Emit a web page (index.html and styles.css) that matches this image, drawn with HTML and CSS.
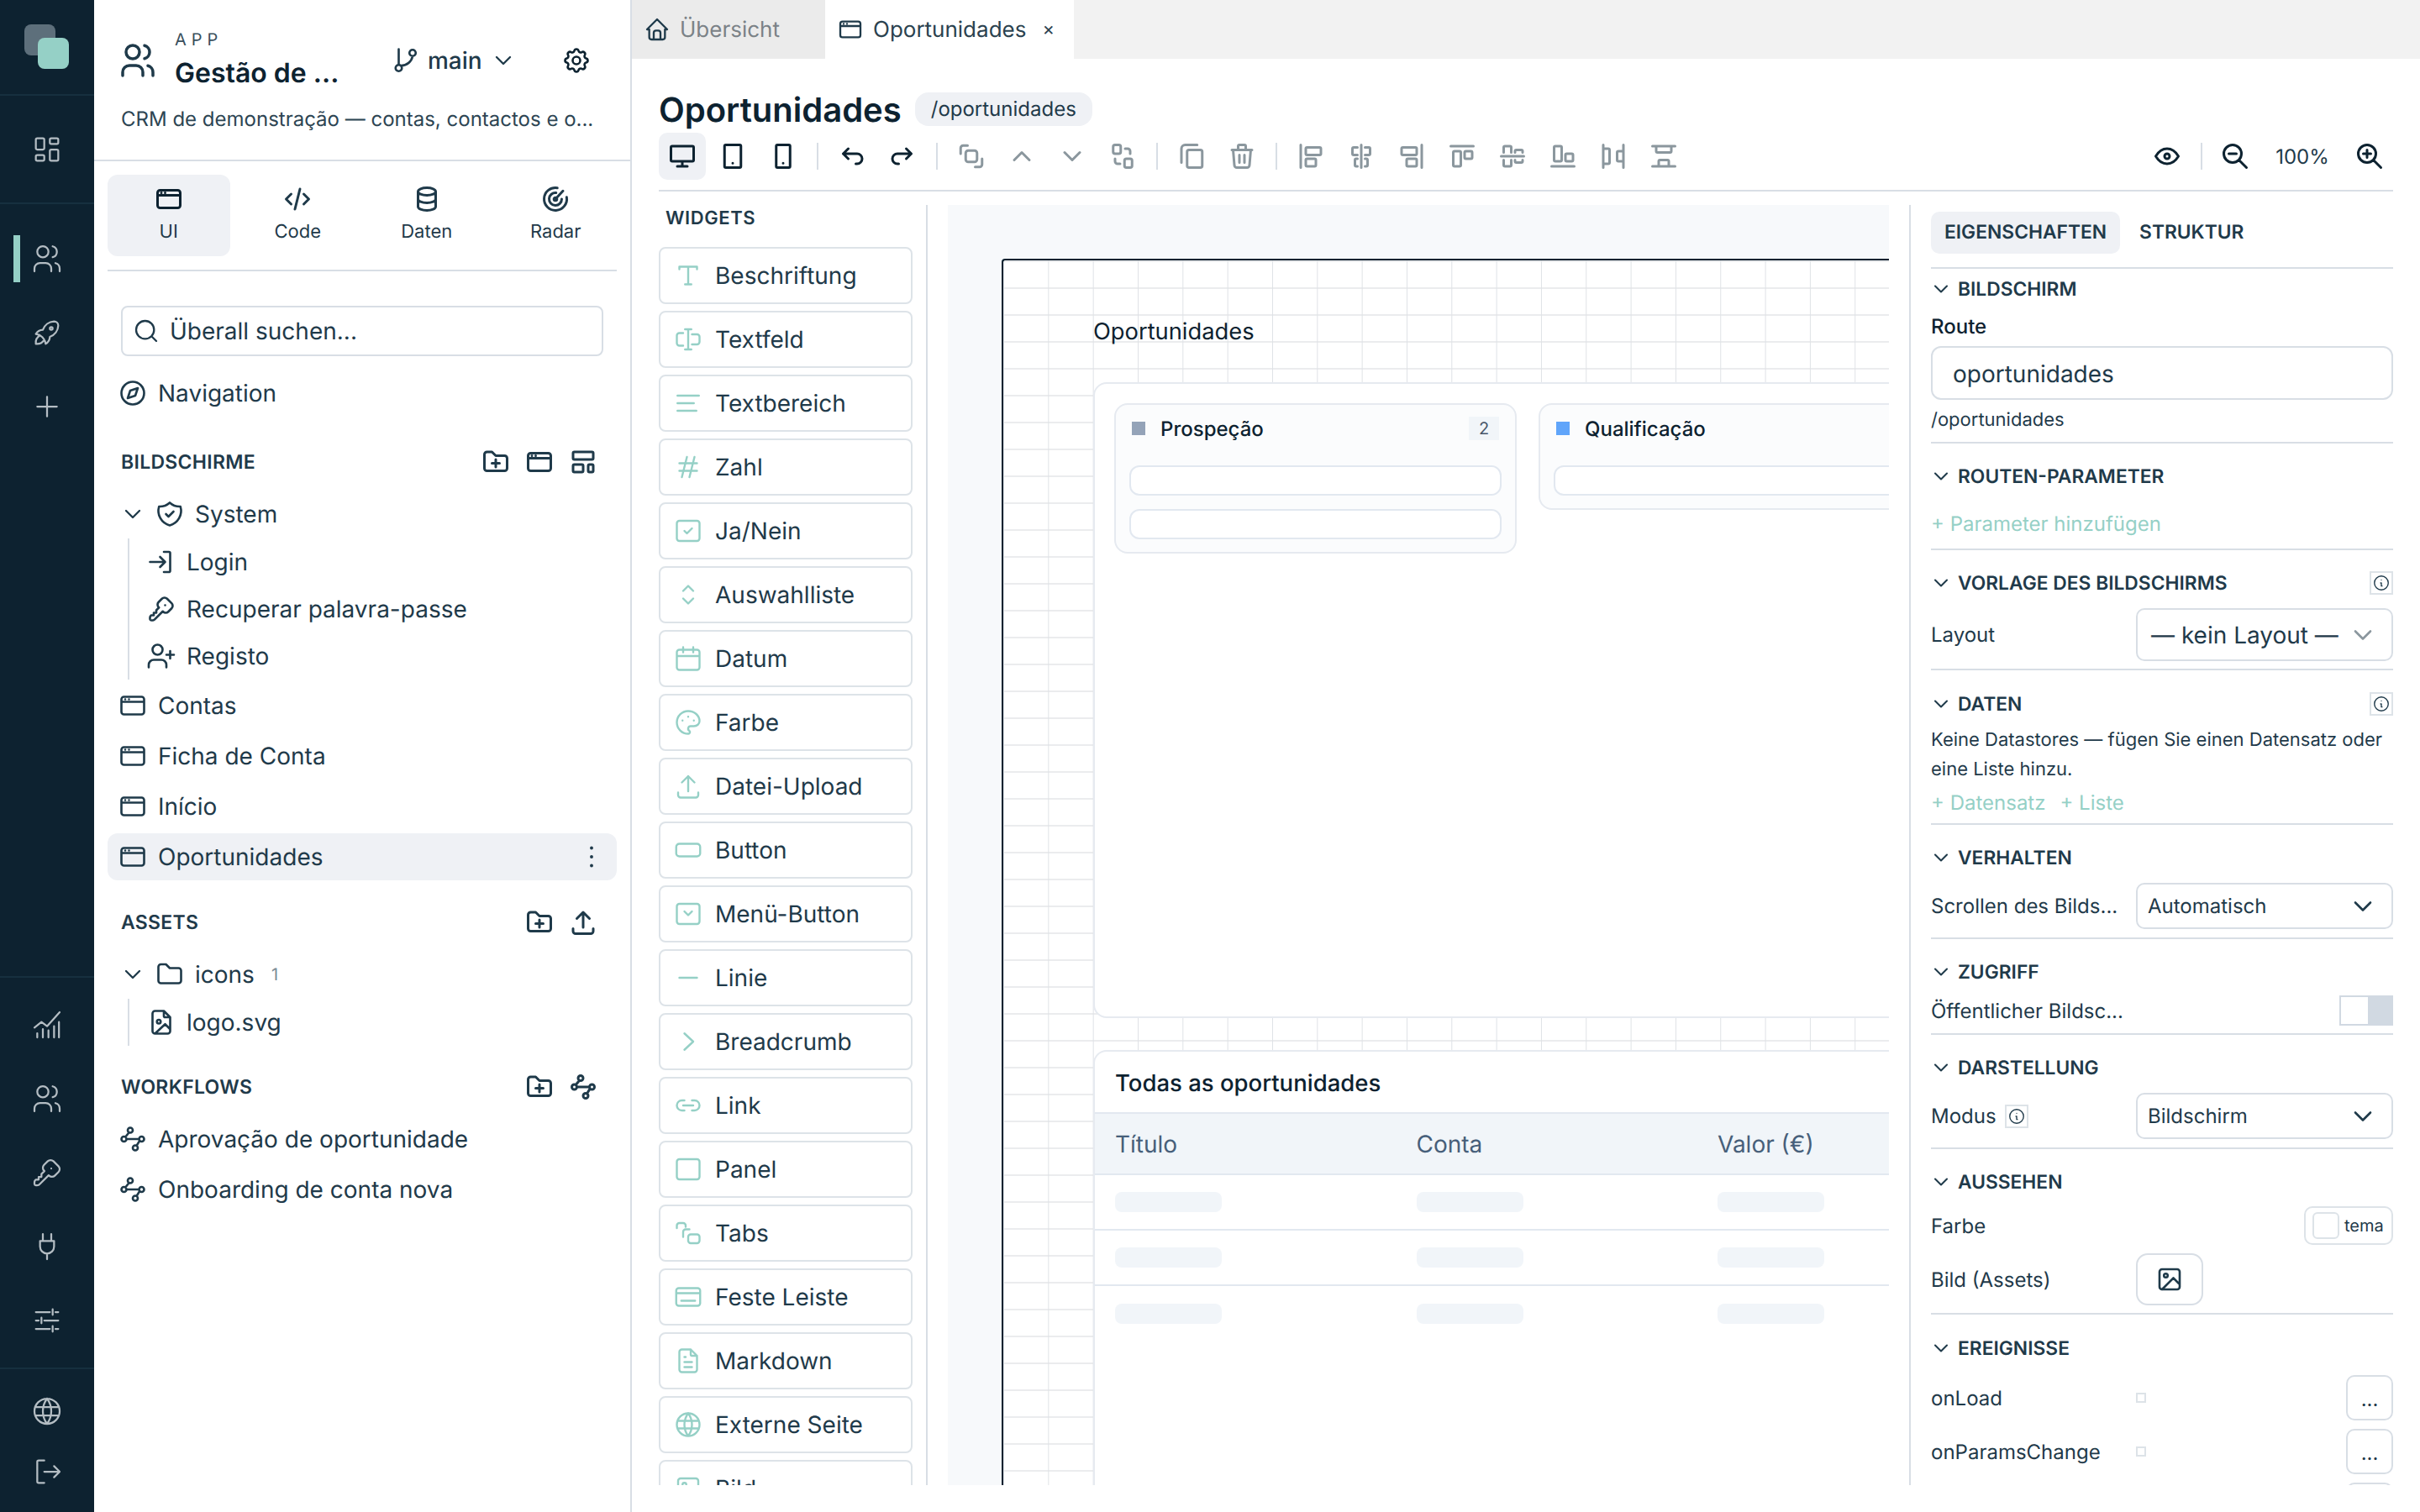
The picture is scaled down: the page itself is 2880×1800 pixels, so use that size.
FILE: index.html
```html
<!DOCTYPE html>
<html lang="de">
<head>
    <meta charset="UTF-8">
    <title>Oportunidades</title>
    <link rel="stylesheet" href="styles.css">
</head>
<body>
    <svg class="sprite" xmlns="http://www.w3.org/2000/svg">
        <symbol id="dashboard" viewBox="0 0 24 24"><path d="M5 4h4a1 1 0 0 1 1 1v6a1 1 0 0 1-1 1H5a1 1 0 0 1-1-1V5a1 1 0 0 1 1-1M5 16h4a1 1 0 0 1 1 1v2a1 1 0 0 1-1 1H5a1 1 0 0 1-1-1v-2a1 1 0 0 1 1-1M15 12h4a1 1 0 0 1 1 1v6a1 1 0 0 1-1 1h-4a1 1 0 0 1-1-1v-6a1 1 0 0 1 1-1M15 4h4a1 1 0 0 1 1 1v2a1 1 0 0 1-1 1h-4a1 1 0 0 1-1-1V5a1 1 0 0 1 1-1"/></symbol>
        <symbol id="users" viewBox="0 0 24 24"><path d="M5 7a4 4 0 1 0 8 0a4 4 0 1 0-8 0M3 21v-2a4 4 0 0 1 4-4h4a4 4 0 0 1 4 4v2M16 3.13a4 4 0 0 1 0 7.75M21 21v-2a4 4 0 0 0-3-3.85"/></symbol>
        <symbol id="rocket" viewBox="0 0 24 24"><path d="M4 13a8 8 0 0 1 7 7a6 6 0 0 0 3-5a9 9 0 0 0 6-8a3 3 0 0 0-3-3a9 9 0 0 0-8 6a6 6 0 0 0-5 3M7 14a6 6 0 0 0-3 6a6 6 0 0 0 6-3M14 9a1 1 0 1 0 2 0a1 1 0 1 0-2 0"/></symbol>
        <symbol id="plus" viewBox="0 0 24 24"><path d="M12 5v14M5 12h14"/></symbol>
        <symbol id="chart" viewBox="0 0 24 24"><path d="M3 14l5-4 4 3 9-10M5 21v-3M9 21v-6M13 21v-5M17 21v-8M20.500 21v-11"/></symbol>
        <symbol id="key" viewBox="0 0 24 24"><path d="M16.555 3.843l3.602 3.602a2.877 2.877 0 0 1 0 4.069l-2.643 2.643a2.877 2.877 0 0 1-4.069 0l-.301-.301l-6.558 6.558a2 2 0 0 1-1.239.578l-.175.008h-1.172a1 1 0 0 1-.993-.883l-.007-.117v-1.172a2 2 0 0 1 .467-1.284l.119-.13l.414-.414h2v-2h2v-2l2.144-2.144l-.301-.301a2.877 2.877 0 0 1 0-4.069l2.643-2.643a2.877 2.877 0 0 1 4.069 0zM15 9h.01"/></symbol>
        <symbol id="plug" viewBox="0 0 24 24"><path d="M9 3v5M15 3v5M7 8h10v4a5 5 0 0 1-10 0zM12 17v4"/></symbol>
        <symbol id="sliders" viewBox="0 0 24 24"><path d="M4 6h10M18 6h2M16 4v4M4 12h2M10 12h10M8 10v4M4 18h10M18 18h2M16 16v4"/></symbol>
        <symbol id="globe" viewBox="0 0 24 24"><path d="M3 12a9 9 0 1 0 18 0a9 9 0 0 0-18 0M3.600 9h16.800M3.600 15h16.800M12 3a15 15 0 0 1 0 18M12 3a15 15 0 0 0 0 18"/></symbol>
        <symbol id="logout" viewBox="0 0 24 24"><path d="M10 4H6a1 1 0 0 0-1 1v14a1 1 0 0 0 1 1h4M10 12h11M17 8l4 4-4 4"/></symbol>
        <symbol id="branch" viewBox="0 0 24 24"><path d="M7 3v12M4.500 18a2.500 2.500 0 1 0 5 0a2.500 2.500 0 1 0-5 0M15.500 6a2.500 2.500 0 1 0 5 0a2.500 2.500 0 1 0-5 0M18 8.500a9 9 0 0 1-9 7.500"/></symbol>
        <symbol id="chevron-down" viewBox="0 0 24 24"><path d="M6 9l6 6 6-6"/></symbol>
        <symbol id="chevron-up" viewBox="0 0 24 24"><path d="M6 15l6-6 6 6"/></symbol>
        <symbol id="chevron-right" viewBox="0 0 24 24"><path d="M9 5.500l7 6.500-7 6.500"/></symbol>
        <symbol id="settings" viewBox="0 0 24 24"><path d="M10.325 4.317c.426-1.756 2.924-1.756 3.35 0a1.724 1.724 0 0 0 2.573 1.066c1.543-.94 3.31.826 2.37 2.37a1.724 1.724 0 0 0 1.065 2.572c1.756.426 1.756 2.924 0 3.35a1.724 1.724 0 0 0-1.066 2.573c.94 1.543-.826 3.31-2.37 2.37a1.724 1.724 0 0 0-2.572 1.065c-.426 1.756-2.924 1.756-3.35 0a1.724 1.724 0 0 0-2.573-1.066c-1.543.94-3.31-.826-2.37-2.37a1.724 1.724 0 0 0-1.065-2.572c-1.756-.426-1.756-2.924 0-3.35a1.724 1.724 0 0 0 1.066-2.573c-.94-1.543.826-3.31 2.37-2.37c1 .608 2.296.07 2.572-1.065M9 12a3 3 0 1 0 6 0a3 3 0 0 0-6 0"/></symbol>
        <symbol id="window" viewBox="0 0 24 24"><path d="M5 5h14a2 2 0 0 1 2 2v10a2 2 0 0 1-2 2H5a2 2 0 0 1-2-2V7a2 2 0 0 1 2-2M3 9h18M6 7h.01M9 7h.01"/></symbol>
        <symbol id="code" viewBox="0 0 24 24"><path d="M7 8l-4 4 4 4M17 8l4 4-4 4M14 4l-4 16"/></symbol>
        <symbol id="database" viewBox="0 0 24 24"><path d="M5 6a7 3 0 1 0 14 0a7 3 0 1 0-14 0M5 6v6a7 3 0 0 0 14 0V6M5 12v6a7 3 0 0 0 14 0v-6"/></symbol>
        <symbol id="radar" viewBox="0 0 24 24"><path d="M13.500 3.100a9 9 0 1 0 7.400 7.400M12.500 7a5 5 0 1 0 4.500 5M10.800 12a1.200 1.200 0 1 0 2.400 0a1.200 1.200 0 1 0-2.400 0M12 12l6-6.500"/></symbol>
        <symbol id="search" viewBox="0 0 24 24"><path d="M3 11a8 8 0 1 0 16 0a8 8 0 1 0-16 0M21 21l-4.300-4.300"/></symbol>
        <symbol id="compass" viewBox="0 0 24 24"><path d="M3 12a9 9 0 1 0 18 0a9 9 0 0 0-18 0M8 16l2-6 6-2-2 6z"/></symbol>
        <symbol id="folder-plus" viewBox="0 0 24 24"><path d="M5 4h4l3 3h7a2 2 0 0 1 2 2v8a2 2 0 0 1-2 2H5a2 2 0 0 1-2-2V6a2 2 0 0 1 2-2M12 10v6M9 13h6"/></symbol>
        <symbol id="folder" viewBox="0 0 24 24"><path d="M5 4h4l3 3h7a2 2 0 0 1 2 2v8a2 2 0 0 1-2 2H5a2 2 0 0 1-2-2V6a2 2 0 0 1 2-2"/></symbol>
        <symbol id="template" viewBox="0 0 24 24"><path d="M5 4h14a1 1 0 0 1 1 1v4a1 1 0 0 1-1 1H5a1 1 0 0 1-1-1V5a1 1 0 0 1 1-1M5 14h6a1 1 0 0 1 1 1v4a1 1 0 0 1-1 1H5a1 1 0 0 1-1-1v-4a1 1 0 0 1 1-1M17 14h2a1 1 0 0 1 1 1v4a1 1 0 0 1-1 1h-2a1 1 0 0 1-1-1v-4a1 1 0 0 1 1-1"/></symbol>
        <symbol id="shield" viewBox="0 0 24 24"><path d="M12 3a12 12 0 0 0 8.500 3a12 12 0 0 1-8.500 15a12 12 0 0 1-8.500-15a12 12 0 0 0 8.500-3M9 12l2 2 4-4"/></symbol>
        <symbol id="login" viewBox="0 0 24 24"><path d="M14 4h4a1 1 0 0 1 1 1v14a1 1 0 0 1-1 1h-4M3 12h12M11 8l4 4-4 4"/></symbol>
        <symbol id="user-plus" viewBox="0 0 24 24"><path d="M16 21v-2a4 4 0 0 0-4-4H6a4 4 0 0 0-4 4v2M5 7a4 4 0 1 0 8 0a4 4 0 1 0-8 0M19 8v6M22 11h-6"/></symbol>
        <symbol id="dots" viewBox="0 0 24 24"><path d="M12 5v.01M12 12v.01M12 19v.01"/></symbol>
        <symbol id="upload" viewBox="0 0 24 24"><path d="M4 17v2a2 2 0 0 0 2 2h12a2 2 0 0 0 2-2v-2M7 9l5-5 5 5M12 4v12"/></symbol>
        <symbol id="file-image" viewBox="0 0 24 24"><path d="M14 3v4a1 1 0 0 0 1 1h4M17 21H7a2 2 0 0 1-2-2V5a2 2 0 0 1 2-2h7l5 5v11a2 2 0 0 1-2 2zM8.500 11.500a1.500 1.500 0 1 0 3 0a1.500 1.500 0 1 0-3 0M7.500 20.500l7.500-7 4 4"/></symbol>
        <symbol id="workflow" viewBox="0 0 24 24"><path d="M8 5a2 2 0 1 0 4 0a2 2 0 1 0-4 0M3 12a2 2 0 1 0 4 0a2 2 0 1 0-4 0M17 12a2 2 0 1 0 4 0a2 2 0 1 0-4 0M12 19a2 2 0 1 0 4 0a2 2 0 1 0-4 0M9 6.800L6.300 10.200M7 12h10M17.300 13.600L15 17.300"/></symbol>
        <symbol id="home" viewBox="0 0 24 24"><path d="M5 12H3l9-9 9 9h-2M5 12v7a2 2 0 0 0 2 2h10a2 2 0 0 0 2-2v-7M9 21v-6a2 2 0 0 1 2-2h2a2 2 0 0 1 2 2v6"/></symbol>
        <symbol id="desktop" viewBox="0 0 24 24"><path d="M4 4h16a1 1 0 0 1 1 1v10a1 1 0 0 1-1 1H4a1 1 0 0 1-1-1V5a1 1 0 0 1 1-1M8 20h8M12 16v4"/></symbol>
        <symbol id="tablet" viewBox="0 0 24 24"><path d="M6.500 3h11a1 1 0 0 1 1 1v16a1 1 0 0 1-1 1h-11a1 1 0 0 1-1-1V4a1 1 0 0 1 1-1M12 17.500v.01"/></symbol>
        <symbol id="phone" viewBox="0 0 24 24"><path d="M7.500 3h9a1 1 0 0 1 1 1v16a1 1 0 0 1-1 1h-9a1 1 0 0 1-1-1V4a1 1 0 0 1 1-1M12 17.500v.01"/></symbol>
        <symbol id="undo" viewBox="0 0 24 24"><path d="M9 14l-4-4 4-4M5 10h11a4 4 0 1 1 0 8h-1"/></symbol>
        <symbol id="redo" viewBox="0 0 24 24"><path d="M15 14l4-4-4-4M19 10H8a4 4 0 1 0 0 8h1"/></symbol>
        <symbol id="group" viewBox="0 0 24 24"><path d="M3.500 10V5.500a2 2 0 0 1 2-2h3.500M20.500 14v4.500a2 2 0 0 1-2 2H15M9.500 7.500h5a2 2 0 0 1 2 2v5a2 2 0 0 1-2 2h-5a2 2 0 0 1-2-2v-5a2 2 0 0 1 2-2"/></symbol>
        <symbol id="ungroup" viewBox="0 0 24 24"><path d="M6 3h3a1.500 1.500 0 0 1 1.500 1.500v4A1.500 1.500 0 0 1 9 10H6a1.500 1.500 0 0 1-1.500-1.500v-4A1.500 1.500 0 0 1 6 3M15 14h3a1.500 1.500 0 0 1 1.500 1.500v4A1.500 1.500 0 0 1 18 21h-3a1.500 1.500 0 0 1-1.500-1.500v-4A1.500 1.500 0 0 1 15 14M14 6h2a2 2 0 0 1 2 2v2M10 18H8a2 2 0 0 1-2-2v-2"/></symbol>
        <symbol id="copy" viewBox="0 0 24 24"><path d="M10 7h9a1.500 1.500 0 0 1 1.500 1.500v11A1.500 1.500 0 0 1 19 21h-9a1.500 1.500 0 0 1-1.500-1.500v-11A1.500 1.500 0 0 1 10 7M16.500 3H7a3 3 0 0 0-3 3v11"/></symbol>
        <symbol id="trash" viewBox="0 0 24 24"><path d="M4 7h16M10 11v6M14 11v6M5 7l1 12a2 2 0 0 0 2 2h8a2 2 0 0 0 2-2l1-12M9 7V4a1 1 0 0 1 1-1h4a1 1 0 0 1 1 1v3"/></symbol>
        <symbol id="align-left" viewBox="0 0 24 24"><path d="M4 3v18M9 5h10a1 1 0 0 1 1 1v4a1 1 0 0 1-1 1H9a1 1 0 0 1-1-1V6a1 1 0 0 1 1-1M9 14h6a1 1 0 0 1 1 1v4a1 1 0 0 1-1 1H9a1 1 0 0 1-1-1v-4a1 1 0 0 1 1-1"/></symbol>
        <symbol id="align-center" viewBox="0 0 24 24"><path d="M12 3v18M9 5H6a1 1 0 0 0-1 1v4a1 1 0 0 0 1 1h3M15 5h3a1 1 0 0 1 1 1v4a1 1 0 0 1-1 1h-3M9 14H8a1 1 0 0 0-1 1v4a1 1 0 0 0 1 1h1M15 14h1a1 1 0 0 1 1 1v4a1 1 0 0 1-1 1h-1"/></symbol>
        <symbol id="align-right" viewBox="0 0 24 24"><path d="M20 3v18M5 5h10a1 1 0 0 1 1 1v4a1 1 0 0 1-1 1H5a1 1 0 0 1-1-1V6a1 1 0 0 1 1-1M9 14h6a1 1 0 0 1 1 1v4a1 1 0 0 1-1 1H9a1 1 0 0 1-1-1v-4a1 1 0 0 1 1-1"/></symbol>
        <symbol id="align-top" viewBox="0 0 24 24"><path d="M3 4h18M6 8h4a1 1 0 0 1 1 1v10a1 1 0 0 1-1 1H6a1 1 0 0 1-1-1V9a1 1 0 0 1 1-1M15 8h4a1 1 0 0 1 1 1v4a1 1 0 0 1-1 1h-4a1 1 0 0 1-1-1V9a1 1 0 0 1 1-1"/></symbol>
        <symbol id="align-middle" viewBox="0 0 24 24"><path d="M3 12h18M5 9V5a1 1 0 0 1 1-1h4a1 1 0 0 1 1 1v4M5 15v4a1 1 0 0 0 1 1h4a1 1 0 0 0 1-1v-4M14 9V8a1 1 0 0 1 1-1h4a1 1 0 0 1 1 1v1M14 15v1a1 1 0 0 0 1 1h4a1 1 0 0 0 1-1v-1"/></symbol>
        <symbol id="align-bottom" viewBox="0 0 24 24"><path d="M3 20h18M6 4h4a1 1 0 0 1 1 1v10a1 1 0 0 1-1 1H6a1 1 0 0 1-1-1V5a1 1 0 0 1 1-1M15 10h4a1 1 0 0 1 1 1v4a1 1 0 0 1-1 1h-4a1 1 0 0 1-1-1v-4a1 1 0 0 1 1-1"/></symbol>
        <symbol id="spread-h" viewBox="0 0 24 24"><path d="M4 3v18M20 3v18M4 6h4a1 1 0 0 1 1 1v10a1 1 0 0 1-1 1H4M20 8h-4a1 1 0 0 0-1 1v6a1 1 0 0 0 1 1h4"/></symbol>
        <symbol id="spread-v" viewBox="0 0 24 24"><path d="M3 4h18M3 20h18M6 4v4a1 1 0 0 0 1 1h10a1 1 0 0 0 1-1V4M8 20v-4a1 1 0 0 1 1-1h6a1 1 0 0 1 1 1v4"/></symbol>
        <symbol id="eye" viewBox="0 0 24 24"><path d="M10 12a2 2 0 1 0 4 0a2 2 0 0 0-4 0M21 12c-2.400 4-5.400 6-9 6c-3.600 0-6.600-2-9-6c2.400-4 5.400-6 9-6c3.600 0 6.600 2 9 6"/></symbol>
        <symbol id="zoom-out" viewBox="0 0 24 24"><path d="M3 10a7 7 0 1 0 14 0a7 7 0 1 0-14 0M7 10h6M21 21l-6-6"/></symbol>
        <symbol id="zoom-in" viewBox="0 0 24 24"><path d="M3 10a7 7 0 1 0 14 0a7 7 0 1 0-14 0M7 10h6M10 7v6M21 21l-6-6"/></symbol>
        <symbol id="w-label" viewBox="0 0 24 24"><path d="M5 7V5h14v2M12 5v14M9.500 19h5"/></symbol>
        <symbol id="w-input" viewBox="0 0 24 24"><path d="M8 7H5a2 2 0 0 0-2 2v6a2 2 0 0 0 2 2h3M15 8h4a2 2 0 0 1 2 2v4a2 2 0 0 1-2 2h-4M9.500 4h5M9.500 20h5M12 4v16"/></symbol>
        <symbol id="w-text" viewBox="0 0 24 24"><path d="M3.500 6h17M3.500 12h13M3.500 18h15"/></symbol>
        <symbol id="w-hash" viewBox="0 0 24 24"><path d="M5 9h14M5 15h14M11 4L7 20M17 4l-4 16"/></symbol>
        <symbol id="w-check" viewBox="0 0 24 24"><path d="M5 4h14a2 2 0 0 1 2 2v12a2 2 0 0 1-2 2H5a2 2 0 0 1-2-2V6a2 2 0 0 1 2-2M9 12l2 2 4-4"/></symbol>
        <symbol id="w-select" viewBox="0 0 24 24"><path d="M8 9l4-4 4 4M16 15l-4 4-4-4"/></symbol>
        <symbol id="w-date" viewBox="0 0 24 24"><path d="M5 5h14a2 2 0 0 1 2 2v12a2 2 0 0 1-2 2H5a2 2 0 0 1-2-2V7a2 2 0 0 1 2-2M3 10h18M8 3v4M16 3v4"/></symbol>
        <symbol id="w-palette" viewBox="0 0 24 24"><path d="M12 21a9 9 0 0 1 0-18c4.970 0 9 3.582 9 8c0 1.060-.474 2.078-1.318 2.828c-.844.750-1.989 1.172-3.182 1.172h-2.500a2 2 0 0 0-1 3.750a1.300 1.300 0 0 1-1 2.250M7.500 10.500v.01M12 7.500v.01M16.500 10.500v.01"/></symbol>
        <symbol id="w-button" viewBox="0 0 24 24"><path d="M5 7h14a2.500 2.500 0 0 1 2.500 2.500v5A2.500 2.500 0 0 1 19 17H5a2.500 2.500 0 0 1-2.500-2.500v-5A2.500 2.500 0 0 1 5 7"/></symbol>
        <symbol id="w-menu" viewBox="0 0 24 24"><path d="M5 4h14a2 2 0 0 1 2 2v12a2 2 0 0 1-2 2H5a2 2 0 0 1-2-2V6a2 2 0 0 1 2-2M9 10l3 3 3-3"/></symbol>
        <symbol id="w-line" viewBox="0 0 24 24"><path d="M5 12h14"/></symbol>
        <symbol id="w-link" viewBox="0 0 24 24"><path d="M9 8H7a4 4 0 0 0 0 8h2M15 8h2a4 4 0 0 1 0 8h-2M8 12h8"/></symbol>
        <symbol id="w-panel" viewBox="0 0 24 24"><path d="M5 4h14a2 2 0 0 1 2 2v12a2 2 0 0 1-2 2H5a2 2 0 0 1-2-2V6a2 2 0 0 1 2-2"/></symbol>
        <symbol id="w-tabs" viewBox="0 0 24 24"><path d="M3 8V6a2 2 0 0 1 2-2h3a2 2 0 0 1 2 2v1M8 15v-4a2 2 0 0 1 2-2h3M14 13h5a2 2 0 0 1 2 2v3a2 2 0 0 1-2 2h-5a2 2 0 0 1-2-2v-3a2 2 0 0 1 2-2"/></symbol>
        <symbol id="w-bar" viewBox="0 0 24 24"><path d="M4.500 5h15a2 2 0 0 1 2 2v10a2 2 0 0 1-2 2h-15a2 2 0 0 1-2-2V7a2 2 0 0 1 2-2M2.500 9h19M6.500 15h11"/></symbol>
        <symbol id="w-doc" viewBox="0 0 24 24"><path d="M14 3v4a1 1 0 0 0 1 1h4M17 21H7a2 2 0 0 1-2-2V5a2 2 0 0 1 2-2h7l5 5v11a2 2 0 0 1-2 2zM9 9h1M9 13h6M9 17h6"/></symbol>
        <symbol id="image" viewBox="0 0 24 24"><path d="M6 4h12a2 2 0 0 1 2 2v12a2 2 0 0 1-2 2H6a2 2 0 0 1-2-2V6a2 2 0 0 1 2-2M7.500 9a1.500 1.500 0 1 0 3 0a1.500 1.500 0 1 0-3 0M6 20l9-9 5 5"/></symbol>
        <symbol id="info" viewBox="0 0 24 24"><path d="M3 12a9 9 0 1 0 18 0a9 9 0 0 0-18 0M12 8h.01M11 12h1v4h1"/></symbol>
    </svg>

    <div class="app">
        <nav class="rail">
            <div class="rail-logo"><span class="logo-back"></span><span class="logo-front"></span></div>
            <div class="rail-home"><svg class="ic rail-ic"><use href="#dashboard"/></svg></div>
            <div class="rail-group">
                <a class="rail-item active"><svg class="ic rail-ic"><use href="#users"/></svg></a>
                <a class="rail-item"><svg class="ic rail-ic"><use href="#rocket"/></svg></a>
                <a class="rail-item"><svg class="ic rail-ic"><use href="#plus"/></svg></a>
            </div>
            <div class="rail-tools">
                <a class="rail-item"><svg class="ic rail-ic"><use href="#chart"/></svg></a>
                <a class="rail-item"><svg class="ic rail-ic"><use href="#users"/></svg></a>
                <a class="rail-item"><svg class="ic rail-ic"><use href="#key"/></svg></a>
                <a class="rail-item"><svg class="ic rail-ic"><use href="#plug"/></svg></a>
                <a class="rail-item"><svg class="ic rail-ic"><use href="#sliders"/></svg></a>
            </div>
            <div class="rail-foot">
                <a class="rail-item short"><svg class="ic rail-ic"><use href="#globe"/></svg></a>
                <a class="rail-item short"><svg class="ic rail-ic"><use href="#logout"/></svg></a>
            </div>
        </nav>

        <aside class="sidebar">
            <header class="app-head">
                <div class="app-top">
                    <svg class="ic ic-48"><use href="#users"/></svg>
                    <div class="app-title">
                        <div class="app-kicker">APP</div>
                        <div class="app-name">Gestão de ...</div>
                    </div>
                    <div class="app-branch">
                        <svg class="ic"><use href="#branch"/></svg>
                        <span>main</span>
                        <svg class="ic ic-32"><use href="#chevron-down"/></svg>
                    </div>
                    <svg class="ic app-gear"><use href="#settings"/></svg>
                </div>
                <p class="app-desc">CRM de demonstração — contas, contactos e o...</p>
            </header>

            <div class="side-tabs">
                <a class="side-tab active"><svg class="ic"><use href="#window"/></svg><span>UI</span></a>
                <a class="side-tab"><svg class="ic"><use href="#code"/></svg><span>Code</span></a>
                <a class="side-tab"><svg class="ic"><use href="#database"/></svg><span>Daten</span></a>
                <a class="side-tab"><svg class="ic"><use href="#radar"/></svg><span>Radar</span></a>
            </div>

            <div class="side-body">
                <div class="search"><svg class="ic ic-32"><use href="#search"/></svg><span>Überall suchen...</span></div>
                <a class="row nav-row"><svg class="ic"><use href="#compass"/></svg>Navigation</a>

                <div class="side-title first"><span>BILDSCHIRME</span>
                    <div class="side-actions">
                        <svg class="ic"><use href="#folder-plus"/></svg>
                        <svg class="ic"><use href="#window"/></svg>
                        <svg class="ic"><use href="#template"/></svg>
                    </div>
                </div>
                <a class="row group-row"><svg class="ic ic-32"><use href="#chevron-down"/></svg><svg class="ic"><use href="#shield"/></svg>System</a>
                <div class="tree">
                    <a class="row"><svg class="ic"><use href="#login"/></svg>Login</a>
                    <a class="row"><svg class="ic"><use href="#key"/></svg>Recuperar palavra-passe</a>
                    <a class="row"><svg class="ic"><use href="#user-plus"/></svg>Registo</a>
                </div>
                <a class="row page-row"><svg class="ic"><use href="#window"/></svg>Contas</a>
                <a class="row page-row"><svg class="ic"><use href="#window"/></svg>Ficha de Conta</a>
                <a class="row page-row"><svg class="ic"><use href="#window"/></svg>Início</a>
                <a class="row page-row current"><svg class="ic"><use href="#window"/></svg>Oportunidades<svg class="ic row-menu"><use href="#dots"/></svg></a>

                <div class="side-title"><span>ASSETS</span>
                    <div class="side-actions">
                        <svg class="ic"><use href="#folder-plus"/></svg>
                        <svg class="ic"><use href="#upload"/></svg>
                    </div>
                </div>
                <a class="row group-row"><svg class="ic ic-32"><use href="#chevron-down"/></svg><svg class="ic"><use href="#folder"/></svg>icons<span class="count">1</span></a>
                <div class="tree">
                    <a class="row"><svg class="ic"><use href="#file-image"/></svg>logo.svg</a>
                </div>

                <div class="side-title"><span>WORKFLOWS</span>
                    <div class="side-actions">
                        <svg class="ic"><use href="#folder-plus"/></svg>
                        <svg class="ic"><use href="#workflow"/></svg>
                    </div>
                </div>
                <a class="row page-row flow-first"><svg class="ic"><use href="#workflow"/></svg>Aprovação de oportunidade</a>
                <a class="row page-row"><svg class="ic"><use href="#workflow"/></svg>Onboarding de conta nova</a>
            </div>
        </aside>

        <main class="main">
            <div class="tabbar">
                <a class="tab"><svg class="ic ic-32"><use href="#home"/></svg>Übersicht</a>
                <a class="tab active"><svg class="ic ic-32"><use href="#window"/></svg>Oportunidades<span class="tab-close">×</span></a>
            </div>

            <div class="editor">
                <div class="page-head">
                    <h1>Oportunidades</h1>
                    <span class="route-pill">/oportunidades</span>
                </div>

                <div class="toolbar">
                    <button class="tool active"><svg class="ic"><use href="#desktop"/></svg></button>
                    <button class="tool"><svg class="ic"><use href="#tablet"/></svg></button>
                    <button class="tool"><svg class="ic"><use href="#phone"/></svg></button>
                    <span class="tool-sep"></span>
                    <button class="tool"><svg class="ic"><use href="#undo"/></svg></button>
                    <button class="tool"><svg class="ic"><use href="#redo"/></svg></button>
                    <span class="tool-sep"></span>
                    <button class="tool off"><svg class="ic"><use href="#group"/></svg></button>
                    <button class="tool off"><svg class="ic"><use href="#chevron-up"/></svg></button>
                    <button class="tool off"><svg class="ic"><use href="#chevron-down"/></svg></button>
                    <button class="tool off"><svg class="ic"><use href="#ungroup"/></svg></button>
                    <span class="tool-sep"></span>
                    <button class="tool off"><svg class="ic"><use href="#copy"/></svg></button>
                    <button class="tool off"><svg class="ic"><use href="#trash"/></svg></button>
                    <span class="tool-sep"></span>
                    <button class="tool off"><svg class="ic"><use href="#align-left"/></svg></button>
                    <button class="tool off"><svg class="ic"><use href="#align-center"/></svg></button>
                    <button class="tool off"><svg class="ic"><use href="#align-right"/></svg></button>
                    <button class="tool off"><svg class="ic"><use href="#align-top"/></svg></button>
                    <button class="tool off"><svg class="ic"><use href="#align-middle"/></svg></button>
                    <button class="tool off"><svg class="ic"><use href="#align-bottom"/></svg></button>
                    <button class="tool off"><svg class="ic"><use href="#spread-h"/></svg></button>
                    <button class="tool off"><svg class="ic"><use href="#spread-v"/></svg></button>
                    <button class="tool push"><svg class="ic"><use href="#eye"/></svg></button>
                    <span class="tool-sep tight"></span>
                    <button class="tool"><svg class="ic"><use href="#zoom-out"/></svg></button>
                    <span class="zoom-value">100%</span>
                    <button class="tool"><svg class="ic"><use href="#zoom-in"/></svg></button>
                </div>

                <div class="workspace">
                    <section class="widgets">
                        <div class="widgets-title">WIDGETS</div>
                        <div class="widget-list">
                            <a class="widget"><svg class="ic"><use href="#w-label"/></svg>Beschriftung</a>
                            <a class="widget"><svg class="ic"><use href="#w-input"/></svg>Textfeld</a>
                            <a class="widget"><svg class="ic"><use href="#w-text"/></svg>Textbereich</a>
                            <a class="widget"><svg class="ic"><use href="#w-hash"/></svg>Zahl</a>
                            <a class="widget"><svg class="ic"><use href="#w-check"/></svg>Ja/Nein</a>
                            <a class="widget"><svg class="ic"><use href="#w-select"/></svg>Auswahlliste</a>
                            <a class="widget"><svg class="ic"><use href="#w-date"/></svg>Datum</a>
                            <a class="widget"><svg class="ic"><use href="#w-palette"/></svg>Farbe</a>
                            <a class="widget"><svg class="ic"><use href="#upload"/></svg>Datei-Upload</a>
                            <a class="widget"><svg class="ic"><use href="#w-button"/></svg>Button</a>
                            <a class="widget"><svg class="ic"><use href="#w-menu"/></svg>Menü-Button</a>
                            <a class="widget"><svg class="ic"><use href="#w-line"/></svg>Linie</a>
                            <a class="widget"><svg class="ic"><use href="#chevron-right"/></svg>Breadcrumb</a>
                            <a class="widget"><svg class="ic"><use href="#w-link"/></svg>Link</a>
                            <a class="widget"><svg class="ic"><use href="#w-panel"/></svg>Panel</a>
                            <a class="widget"><svg class="ic"><use href="#w-tabs"/></svg>Tabs</a>
                            <a class="widget"><svg class="ic"><use href="#w-bar"/></svg>Feste Leiste</a>
                            <a class="widget"><svg class="ic"><use href="#w-doc"/></svg>Markdown</a>
                            <a class="widget"><svg class="ic"><use href="#globe"/></svg>Externe Seite</a>
                            <a class="widget"><svg class="ic"><use href="#image"/></svg>Bild</a>
                        </div>
                    </section>

                    <section class="canvas">
                        <div class="frame">
                            <div class="frame-title">Oportunidades</div>
                            <div class="kanban">
                                <div class="lane">
                                    <div class="lane-head">
                                        <span class="lane-mark gray"></span>Prospeção<span class="lane-count">2</span>
                                    </div>
                                    <div class="lane-card"></div>
                                    <div class="lane-card"></div>
                                </div>
                                <div class="lane">
                                    <div class="lane-head">
                                        <span class="lane-mark blue"></span>Qualificação
                                    </div>
                                    <div class="lane-card"></div>
                                </div>
                            </div>
                            <div class="table-card">
                                <div class="table-title">Todas as oportunidades</div>
                                <div class="table-row table-head"><span>Título</span><span>Conta</span><span>Valor (€)</span></div>
                                <div class="table-row"><i></i><i></i><i></i></div>
                                <div class="table-row"><i></i><i></i><i></i></div>
                                <div class="table-row last"><i></i><i></i><i></i></div>
                            </div>
                        </div>
                    </section>

                    <section class="props">
                        <div class="props-tabs">
                            <a class="props-tab active">EIGENSCHAFTEN</a>
                            <a class="props-tab">STRUKTUR</a>
                        </div>

                        <div class="prop-sec sec-screen">
                            <div class="prop-head"><svg class="ic ic-28"><use href="#chevron-down"/></svg>BILDSCHIRM</div>
                            <div class="prop-label">Route</div>
                            <div class="field">oportunidades</div>
                            <div class="prop-hint">/oportunidades</div>
                        </div>

                        <div class="prop-sec sec-params">
                            <div class="prop-head"><svg class="ic ic-28"><use href="#chevron-down"/></svg>ROUTEN-PARAMETER</div>
                            <div class="add-links"><a>+ Parameter hinzufügen</a></div>
                        </div>

                        <div class="prop-sec sec-layout">
                            <div class="prop-head"><svg class="ic ic-28"><use href="#chevron-down"/></svg>VORLAGE DES BILDSCHIRMS<span class="info-box end"><svg class="ic"><use href="#info"/></svg></span></div>
                            <div class="prop-row">
                                <span>Layout</span>
                                <div class="picker big">— kein Layout —<svg class="ic faded"><use href="#chevron-down"/></svg></div>
                            </div>
                        </div>

                        <div class="prop-sec sec-data">
                            <div class="prop-head"><svg class="ic ic-28"><use href="#chevron-down"/></svg>DATEN<span class="info-box end"><svg class="ic"><use href="#info"/></svg></span></div>
                            <p class="prop-text">Keine Datastores — fügen Sie einen Datensatz oder eine Liste hinzu.</p>
                            <div class="add-links"><a>+ Datensatz</a><a>+ Liste</a></div>
                        </div>

                        <div class="prop-sec">
                            <div class="prop-head"><svg class="ic ic-28"><use href="#chevron-down"/></svg>VERHALTEN</div>
                            <div class="prop-row">
                                <span>Scrollen des Bilds...</span>
                                <div class="picker">Automatisch<svg class="ic"><use href="#chevron-down"/></svg></div>
                            </div>
                        </div>

                        <div class="prop-sec sec-access">
                            <div class="prop-head"><svg class="ic ic-28"><use href="#chevron-down"/></svg>ZUGRIFF</div>
                            <div class="prop-row">
                                <span>Öffentlicher Bildsc...</span>
                                <div class="switch"></div>
                            </div>
                        </div>

                        <div class="prop-sec">
                            <div class="prop-head"><svg class="ic ic-28"><use href="#chevron-down"/></svg>DARSTELLUNG</div>
                            <div class="prop-row">
                                <span class="with-info">Modus<span class="info-box"><svg class="ic"><use href="#info"/></svg></span></span>
                                <div class="picker">Bildschirm<svg class="ic"><use href="#chevron-down"/></svg></div>
                            </div>
                        </div>

                        <div class="prop-sec sec-look">
                            <div class="prop-head"><svg class="ic ic-28"><use href="#chevron-down"/></svg>AUSSEHEN</div>
                            <div class="prop-row">
                                <span>Farbe</span>
                                <div class="swatch"><i></i>tema</div>
                            </div>
                            <div class="prop-row image-row">
                                <span>Bild (Assets)</span>
                                <div class="image-btn"><svg class="ic"><use href="#image"/></svg></div>
                            </div>
                        </div>

                        <div class="prop-sec sec-events">
                            <div class="prop-head"><svg class="ic ic-28"><use href="#chevron-down"/></svg>EREIGNISSE</div>
                            <div class="event-row"><span>onLoad</span><i></i><div class="more">...</div></div>
                            <div class="event-row"><span>onParamsChange</span><i></i><div class="more">...</div></div>
                            <div class="event-row"><span></span><i class="none"></i><div class="more"></div></div>
                        </div>
                    </section>
                </div>
            </div>
        </main>
    </div>
</body>
</html>
```

FILE: styles.css
```css
* {
    box-sizing: border-box;
}

html, body {
    margin: 0;
    height: 100%;
}

body {
    font-family: Inter, "Noto Sans", sans-serif;
    font-size: 28px;
    color: #1f3a4a;
    background: white;
    overflow: hidden;
    text-rendering: geometricPrecision;
}

.sprite {
    display: none;
}

.ic {
    width: 36px;
    height: 36px;
    flex: none;
    fill: none;
    stroke: currentColor;
    stroke-width: 1.75;
    stroke-linecap: round;
    stroke-linejoin: round;
}

.ic-28 { width: 28px; height: 28px; }
.ic-32 { width: 32px; height: 32px; }
.ic-48 { width: 48px; height: 48px; }

.app {
    display: flex;
    height: 1800px;
}

/* dark icon rail */
.rail {
    width: 112px;
    flex: none;
    display: flex;
    flex-direction: column;
    background: #0d2230;
    color: #b4bdc3;
}

.rail-logo {
    position: relative;
    height: 114px;
    flex: none;
    border-bottom: 2px solid #16303f;
}

.logo-back,
.logo-front {
    position: absolute;
    width: 37px;
    height: 37px;
    border-radius: 8px;
}

.logo-back {
    left: 29px;
    top: 29px;
    background: #5d6f7b;
}

.logo-front {
    left: 45px;
    top: 45px;
    background: #95d0c6;
}

.rail-home {
    height: 129px;
    flex: none;
    display: flex;
    align-items: center;
    justify-content: center;
    border-bottom: 2px solid #16303f;
}

.rail-ic {
    width: 40px;
    height: 40px;
    stroke-width: 1.35;
}

.rail-group {
    padding-top: 21px;
    flex: 1;
}

.rail-item {
    position: relative;
    height: 88px;
    display: flex;
    align-items: center;
    justify-content: center;
}

.rail-item.short {
    height: 72px;
}

.rail-item.active::before {
    content: "";
    position: absolute;
    left: 16px;
    top: 16px;
    width: 8px;
    height: 56px;
    background: #95d0c6;
}

.rail-tools {
    border-top: 2px solid #16303f;
    padding: 12px 0;
}

.rail-foot {
    border-top: 2px solid #16303f;
    padding: 14px 0 12px;
}

/* project sidebar */
.sidebar {
    width: 640px;
    flex: none;
    border-right: 2px solid #d8dee5;
}

.app-head {
    height: 192px;
    padding: 36px 0 0 28px;
    border-bottom: 2px solid #d8dee5;
}

.app-top {
    display: flex;
    align-items: center;
    height: 72px;
}

.app-title {
    width: 256px;
    margin: 0 0 4px 20px;
}

.app-kicker {
    font-size: 20px;
    line-height: 24px;
    letter-spacing: 6px;
    color: #3a4f5c;
}

.app-name {
    margin-top: 9px;
    font-size: 32px;
    line-height: 38px;
    font-weight: 600;
    color: #0d2230;
}

.app-branch {
    display: flex;
    align-items: center;
    gap: 9px;
    width: 204px;
    font-weight: 500;
}

.app-gear {
    color: #0d2230;
}

.app-desc {
    margin: 18px 0 0 4px;
    font-size: 24px;
    line-height: 32px;
    color: #2d4553;
    white-space: nowrap;
}

.side-tabs {
    display: grid;
    grid-template-columns: repeat(4, 1fr);
    gap: 8px;
    margin: 16px 16px 0;
    padding-bottom: 16px;
    border-bottom: 2px solid #d8dee5;
}

.side-tab {
    height: 97px;
    padding-bottom: 4px;
    display: flex;
    flex-direction: column;
    align-items: center;
    justify-content: center;
    gap: 7px;
    border-radius: 12px;
    font-size: 22px;
    line-height: 28px;
}

.side-tab .ic {
    stroke-width: 2;
}

.side-tab.active {
    background: #eff1f5;
}

.side-tab.active .ic {
    color: #0d2230;
}

.side-body {
    padding: 0 16px;
}

.search {
    display: flex;
    align-items: center;
    gap: 12px;
    height: 60px;
    margin: 41px 16px 0;
    padding-left: 12px;
    border: 2px solid #d8dee5;
    border-radius: 8px;
}

.row {
    display: flex;
    align-items: center;
    gap: 12px;
    height: 56px;
    padding-left: 12px;
}

.nav-row {
    margin-top: 16px;
}

.page-row {
    margin-top: 4px;
}

.flow-first {
    margin-top: 14px;
}

.group-row {
    margin-top: 14px;
    padding-left: 14px;
}

.group-row .ic-32 {
    margin-right: -2px;
}

.current {
    background: #eff1f5;
    border-radius: 12px;
}

.row-menu {
    margin-left: auto;
    margin-right: 12px;
    stroke-width: 2.6;
}

.count {
    margin-left: 8px;
    font-size: 20px;
    color: #7b8a94;
}

.tree {
    margin: 1px 0 -1px 24px;
    padding-left: 20px;
    border-left: 2px solid #d8dee5;
}

.tree .row {
    padding-left: 0;
}

.side-title {
    display: flex;
    align-items: center;
    justify-content: space-between;
    height: 40px;
    margin: 30px 22px 0 16px;
    font-size: 23px;
    font-weight: 600;
    letter-spacing: 0.3px;
}

.side-title.first {
    margin-top: 34px;
}

.side-actions {
    display: flex;
    gap: 16px;
}

.side-actions .ic {
    stroke-width: 2;
}

/* right of the sidebar */
.main {
    flex: 1;
    min-width: 0;
    display: flex;
    flex-direction: column;
}

.tabbar {
    display: flex;
    height: 70px;
    flex: none;
    background: #f2f2f2;
}

.tab {
    display: flex;
    align-items: center;
    gap: 11px;
    width: 230px;
    padding-left: 14px;
    background: #ebebeb;
    color: #7b8287;
    font-size: 26px;
}

.tab .ic {
    color: #1f3a4a;
}

.tab.active {
    width: 296px;
    padding-left: 14px;
    background: white;
    color: #2b424f;
}

.tab-close {
    margin-left: 8px;
    font-size: 22px;
}

.editor {
    flex: 1;
    min-height: 0;
    display: flex;
    flex-direction: column;
    padding: 40px 32px 32px;
}

.page-head {
    display: flex;
    align-items: center;
    gap: 16px;
    height: 40px;
    flex: none;
}

h1 {
    margin: 0;
    font-size: 40px;
    font-weight: 600;
    color: #0d2230;
}

.route-pill {
    height: 40px;
    padding: 0 19px;
    border-radius: 16px;
    background: #eff1f5;
    font-size: 24px;
    line-height: 40px;
}

.toolbar {
    display: flex;
    align-items: center;
    gap: 4px;
    height: 70px;
    flex: none;
    margin-top: 8px;
    padding-bottom: 12px;
    border-bottom: 2px solid #d8dee5;
}

.tool {
    width: 56px;
    height: 56px;
    flex: none;
    display: flex;
    align-items: center;
    justify-content: center;
    padding: 0;
    border: 0;
    border-radius: 10px;
    background: none;
    color: #0d2230;
}

.tool .ic {
    stroke-width: 2;
}

.tool.active {
    background: #eff1f5;
}

.tool.off {
    color: #8b979e;
}

.tool.push {
    margin-left: auto;
}

.tool-sep {
    width: 2px;
    height: 32px;
    margin: 0 8px;
    background: #d8dee5;
}

.tool-sep.tight {
    margin: 0 7px 0 8px;
}

.zoom-value {
    width: 96px;
    text-align: center;
    font-size: 24px;
}

.workspace {
    flex: 1;
    min-height: 0;
    display: flex;
}

/* widget palette */
.widgets {
    width: 320px;
    flex: none;
    margin-top: 16px;
    padding-right: 16px;
    border-right: 2px solid #d8dee5;
    overflow: hidden;
}

.widgets-title {
    height: 32px;
    margin: 0 0 18px 8px;
    font-size: 22px;
    line-height: 32px;
    font-weight: 600;
    letter-spacing: 0.6px;
}

.widget-list {
    display: flex;
    flex-direction: column;
    gap: 8px;
}

.widget {
    display: flex;
    align-items: center;
    gap: 14px;
    height: 68px;
    flex: none;
    padding-left: 15px;
    border: 2px solid #dde3e8;
    border-radius: 8px;
}

.widget .ic {
    color: #95d0c6;
    stroke-width: 1.6;
}

/* page preview */
.canvas {
    width: 1120px;
    flex: none;
    margin: 16px 0 0 24px;
    padding: 64px 0 0 64px;
    background: #f7f9fb;
    overflow: hidden;
}

.frame {
    width: 1600px;
    min-height: 1500px;
    padding: 65px 0 0 107px;
    border-top: 2px solid #0d2230;
    border-left: 2px solid #0d2230;
    border-top-left-radius: 4px;
    background-color: white;
    background-image:
        linear-gradient(to right, transparent 52.2px, #dfe2e6 52.2px),
        linear-gradient(to bottom, transparent 30px, #ebecee 30px);
    background-size: 53.33px 32px;
    background-position: 1px 2px;
}

.frame-title {
    height: 40px;
    font-size: 27.3px;
    line-height: 40px;
    color: #0d2230;
}

.kanban {
    display: flex;
    align-items: flex-start;
    gap: 26px;
    width: 1400px;
    height: 757px;
    margin-top: 40px;
    padding: 23px;
    border: 2px solid #e6eaf0;
    border-radius: 16px;
    background: white;
}

.lane {
    width: 479px;
    flex: none;
    padding: 14px 16px 15px;
    border: 2px solid #e6eaf0;
    border-radius: 16px;
    background: #fbfcfd;
}

.lane-head {
    display: flex;
    align-items: center;
    height: 28px;
    margin-bottom: 30px;
    padding-left: 3px;
    font-size: 24px;
    font-weight: 500;
    color: #0d2230;
}

.lane-mark {
    width: 16px;
    height: 16px;
    margin-right: 18px;
}

.lane-mark.gray { background: #94a3b8; }
.lane-mark.blue { background: #60a5fa; }

.lane-count {
    width: 36px;
    height: 28px;
    margin: 0 3px 0 auto;
    background: #f1f5f9;
    font-size: 20px;
    font-weight: 400;
    line-height: 28px;
    text-align: center;
    color: #475569;
}

.lane-card {
    height: 36px;
    margin-bottom: 16px;
    border: 2px solid #e2e8f0;
    border-radius: 12px;
    background: white;
}

.lane-card:last-child {
    margin-bottom: 0;
}

.table-card {
    width: 1400px;
    height: 900px;
    margin-top: 38px;
    border-top: 2px solid #e6eaf0;
    border-left: 2px solid #e6eaf0;
    border-top-left-radius: 16px;
    background: white;
}

.table-title {
    height: 72px;
    padding: 0 24px;
    font-size: 27.5px;
    line-height: 74px;
    font-weight: 500;
    color: #0d2230;
}

.table-row {
    display: grid;
    grid-template-columns: repeat(3, 358.5px);
    align-items: center;
    height: 66px;
    padding-left: 24px;
    border-bottom: 2px solid #e2e8f0;
}

.table-row.last {
    border-bottom: 0;
}

.table-row i {
    width: 127px;
    height: 24px;
    border-radius: 8px;
    background: #f1f5f9;
}

.table-head {
    height: 75px;
    border-top: 2px solid #e2e8f0;
    background: #f1f5f9;
    color: #475f7a;
}

/* properties panel */
.props {
    flex: 1;
    min-width: 0;
    margin: 16px 0 0 24px;
    padding: 8px 0 0 24px;
    border-left: 2px solid #d8dee5;
    overflow: hidden;
    font-size: 24px;
}

.props-tabs {
    display: flex;
    gap: 7px;
    height: 68px;
    padding-bottom: 16px;
    border-bottom: 2px solid #d8dee5;
}

.props-tab {
    height: 50px;
    padding: 0 16px;
    border-radius: 10px;
    font-size: 22.8px;
    line-height: 50px;
    font-weight: 600;
}

.props-tab.active {
    background: #eff1f5;
}

.prop-sec {
    padding: 25px 0 10px;
    border-bottom: 2px solid #d8dee5;
}

.prop-sec:last-child {
    border-bottom: 0;
}

.prop-head {
    display: flex;
    align-items: center;
    gap: 6px;
    height: 28px;
    margin-bottom: 16px;
    font-size: 22.8px;
    font-weight: 600;
}

.prop-head .ic-28 {
    margin-left: -2px;
}

.info-box {
    width: 28px;
    height: 28px;
    display: inline-flex;
    align-items: center;
    justify-content: center;
    border: 2px solid #dde3e8;
    color: #1f3a4a;
}

.info-box .ic {
    width: 22px;
    height: 22px;
    stroke-width: 1.5;
}

.info-box.end {
    margin-left: auto;
}

.sec-screen {
    padding: 10px 0 11px;
}

.sec-screen .prop-head {
    margin-bottom: 16px;
}

.prop-label {
    height: 30px;
    line-height: 30px;
    font-weight: 500;
    color: #0d2230;
}

.field {
    height: 64px;
    margin-top: 8px;
    padding-left: 24px;
    border: 2px solid #d8dee5;
    border-radius: 12px;
    font-size: 28px;
    line-height: 62px;
}

.prop-hint {
    height: 30px;
    margin-top: 9px;
    font-size: 22px;
    line-height: 30px;
}

.add-links {
    display: flex;
    gap: 17px;
    height: 36px;
    font-size: 24px;
    line-height: 36px;
    color: #95d0c6;
}

.sec-params {
    padding-top: 25px;
}

.sec-params .prop-head {
    margin-bottom: 25px;
}

.sec-params .add-links {
    margin-bottom: 1px;
}

.sec-layout .picker {
    height: 63px;
}

.sec-layout {
    padding-bottom: 9px;
}

.sec-data {
    padding: 26px 0 6px;
}

.sec-data .prop-head {
    margin-bottom: 12px;
}

.prop-text {
    margin: 0 0 4px;
    font-size: 22px;
    line-height: 35px;
}

.prop-row {
    display: flex;
    align-items: center;
    justify-content: space-between;
}

.picker {
    display: flex;
    align-items: center;
    justify-content: space-between;
    width: 306px;
    height: 55px;
    padding: 0 16px 0 12px;
    border: 2px solid #d8dee5;
    border-radius: 10px;
}

.picker.big {
    padding-left: 16px;
    font-size: 28px;
}

.faded {
    color: #8b979e;
}

.sec-access {
    padding-bottom: 9px;
}

.sec-access .prop-head {
    margin-bottom: 14px;
}

.switch {
    width: 64px;
    height: 36px;
    border: 2px solid #d1d9e2;
    background: linear-gradient(to right, white 32px, #d1d9e2 32px);
}

.with-info {
    display: flex;
    align-items: center;
    gap: 10px;
}

.sec-look {
    padding-bottom: 9px;
}

.sec-look .prop-head {
    margin-bottom: 15px;
}

.swatch {
    display: flex;
    align-items: center;
    gap: 6px;
    width: 106px;
    height: 46px;
    padding-left: 8px;
    border: 2px solid #dde3e8;
    border-radius: 10px;
    font-size: 20px;
}

.swatch i {
    width: 32px;
    height: 32px;
    border: 2px solid #dde3e8;
    border-radius: 6px;
}

.image-row {
    margin-top: 10px;
}

.image-btn {
    display: flex;
    align-items: center;
    justify-content: center;
    width: 80px;
    height: 62px;
    margin-right: 226px;
    border: 2px solid #d8dee5;
    border-radius: 14px;
}

.sec-events {
    padding-top: 26px;
}

.sec-events .prop-head {
    margin-bottom: 18px;
}

.event-row {
    display: grid;
    grid-template-columns: 244px 1fr 56px;
    align-items: center;
    height: 54px;
    margin-bottom: 10px;
}

.event-row i {
    width: 12px;
    height: 12px;
    border: 2px solid #dde3e8;
}

.event-row i.none {
    display: none;
}

.more {
    grid-column: 3;
    width: 56px;
    height: 54px;
    border: 2px solid #d8dee5;
    border-radius: 10px;
    text-align: center;
    line-height: 54px;
}
```
